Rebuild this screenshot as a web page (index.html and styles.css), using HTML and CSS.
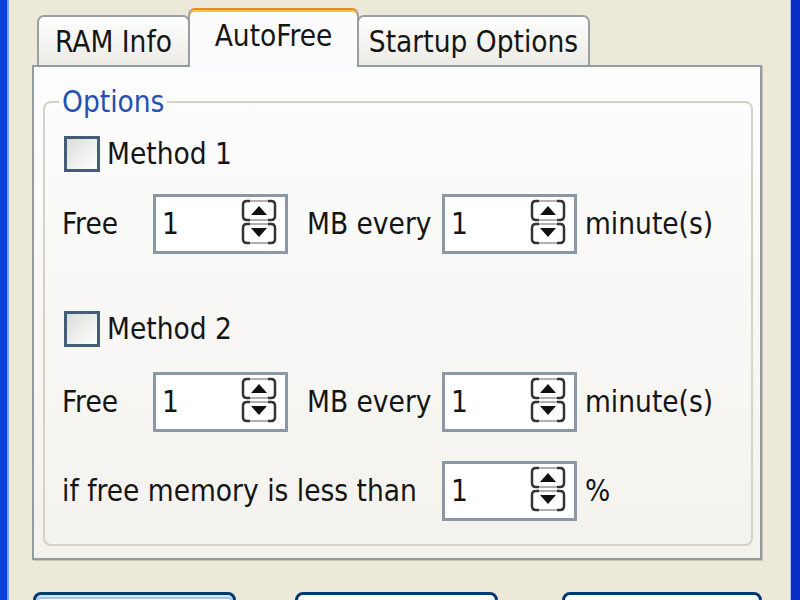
FILE: index.html
```html
<!DOCTYPE html>
<html>
<head>
<meta charset="utf-8">
<link rel="stylesheet" href="styles.css">
</head>
<body>
<div class="window">
  <div class="frame-left"></div>
  <div class="client">
    <div class="tabs">
      <div class="tab tab-ram">RAM Info</div>
      <div class="tab tab-auto active">AutoFree</div>
      <div class="tab tab-startup">Startup Options</div>
    </div>
    <div class="panel">
      <fieldset class="group">
        <legend>Options</legend>
        <div class="form">
          <div class="check-row row-m1"><span class="box"></span><span>Method 1</span></div>
          <div class="row row-a">
            <span class="lbl">Free</span>
            <div class="spin"><span class="val">1</span><svg class="spin-btn" viewBox="0 0 36 46" width="36" height="46"><path d="M9 2H6Q2 2 2 6V17Q2 21 6 21H9M27 2H30Q34 2 34 6V17Q34 21 30 21H27" fill="none" stroke="#333" stroke-width="2.5"/><path d="M9 2H27M9 21H27" stroke="#b0b0b0" stroke-width="2"/><path d="M18 7L26 16H10Z" fill="#111"/><path d="M9 25H6Q2 25 2 29V40Q2 44 6 44H9M27 25H30Q34 25 34 29V40Q34 44 30 44H27" fill="none" stroke="#333" stroke-width="2.5"/><path d="M9 25H27M9 44H27" stroke="#b0b0b0" stroke-width="2"/><path d="M10 29H26L18 38Z" fill="#111"/></svg></div>
            <span class="lbl lbl-mid">MB every</span>
            <div class="spin"><span class="val">1</span><svg class="spin-btn" viewBox="0 0 36 46" width="36" height="46"><path d="M9 2H6Q2 2 2 6V17Q2 21 6 21H9M27 2H30Q34 2 34 6V17Q34 21 30 21H27" fill="none" stroke="#333" stroke-width="2.5"/><path d="M9 2H27M9 21H27" stroke="#b0b0b0" stroke-width="2"/><path d="M18 7L26 16H10Z" fill="#111"/><path d="M9 25H6Q2 25 2 29V40Q2 44 6 44H9M27 25H30Q34 25 34 29V40Q34 44 30 44H27" fill="none" stroke="#333" stroke-width="2.5"/><path d="M9 25H27M9 44H27" stroke="#b0b0b0" stroke-width="2"/><path d="M10 29H26L18 38Z" fill="#111"/></svg></div>
            <span class="lbl lbl-unit">minute(s)</span>
          </div>
          <div class="check-row row-m2"><span class="box"></span><span>Method 2</span></div>
          <div class="row row-b">
            <span class="lbl">Free</span>
            <div class="spin"><span class="val">1</span><svg class="spin-btn" viewBox="0 0 36 46" width="36" height="46"><path d="M9 2H6Q2 2 2 6V17Q2 21 6 21H9M27 2H30Q34 2 34 6V17Q34 21 30 21H27" fill="none" stroke="#333" stroke-width="2.5"/><path d="M9 2H27M9 21H27" stroke="#b0b0b0" stroke-width="2"/><path d="M18 7L26 16H10Z" fill="#111"/><path d="M9 25H6Q2 25 2 29V40Q2 44 6 44H9M27 25H30Q34 25 34 29V40Q34 44 30 44H27" fill="none" stroke="#333" stroke-width="2.5"/><path d="M9 25H27M9 44H27" stroke="#b0b0b0" stroke-width="2"/><path d="M10 29H26L18 38Z" fill="#111"/></svg></div>
            <span class="lbl lbl-mid">MB every</span>
            <div class="spin"><span class="val">1</span><svg class="spin-btn" viewBox="0 0 36 46" width="36" height="46"><path d="M9 2H6Q2 2 2 6V17Q2 21 6 21H9M27 2H30Q34 2 34 6V17Q34 21 30 21H27" fill="none" stroke="#333" stroke-width="2.5"/><path d="M9 2H27M9 21H27" stroke="#b0b0b0" stroke-width="2"/><path d="M18 7L26 16H10Z" fill="#111"/><path d="M9 25H6Q2 25 2 29V40Q2 44 6 44H9M27 25H30Q34 25 34 29V40Q34 44 30 44H27" fill="none" stroke="#333" stroke-width="2.5"/><path d="M9 25H27M9 44H27" stroke="#b0b0b0" stroke-width="2"/><path d="M10 29H26L18 38Z" fill="#111"/></svg></div>
            <span class="lbl lbl-unit">minute(s)</span>
          </div>
          <div class="row row-c">
            <span class="lbl lbl-long">if free memory is less than</span>
            <div class="spin"><span class="val">1</span><svg class="spin-btn" viewBox="0 0 36 46" width="36" height="46"><path d="M9 2H6Q2 2 2 6V17Q2 21 6 21H9M27 2H30Q34 2 34 6V17Q34 21 30 21H27" fill="none" stroke="#333" stroke-width="2.5"/><path d="M9 2H27M9 21H27" stroke="#b0b0b0" stroke-width="2"/><path d="M18 7L26 16H10Z" fill="#111"/><path d="M9 25H6Q2 25 2 29V40Q2 44 6 44H9M27 25H30Q34 25 34 29V40Q34 44 30 44H27" fill="none" stroke="#333" stroke-width="2.5"/><path d="M9 25H27M9 44H27" stroke="#b0b0b0" stroke-width="2"/><path d="M10 29H26L18 38Z" fill="#111"/></svg></div>
            <span class="lbl lbl-unit">%</span>
          </div>
        </div>
      </fieldset>
    </div>
    <div class="buttons">
      <div class="btn btn-default"><span class="focus"></span></div>
      <div class="btn btn-2"></div>
      <div class="btn btn-3"></div>
    </div>
  </div>
  <div class="frame-right"></div>
</div>
</body>
</html>
```

FILE: styles.css
```css
html, body {
  margin: 0;
  height: 600px;
  overflow: hidden;
}
body {
  background: #ece9d8;
  font-family: "DejaVu Sans Condensed", "DejaVu Sans", sans-serif;
  font-size: 29.5px;
  color: #151515;
}
.window {
  display: flex;
  height: 600px;
  overflow: hidden;
}
.frame-left {
  width: 7px;
  background: #0b40dc;
  border-right: 2px solid #7ea6ee;
}
.frame-right {
  width: 9px;
  background: #0a2ec4;
  border-left: 1px solid #9fbaf0;
}
.client {
  flex: 1;
  box-sizing: border-box;
  height: 600px;
  overflow: hidden;
  padding: 8px 28px 0 23px;
}
.tabs {
  display: flex;
  align-items: flex-end;
  padding-left: 5px;
  height: 59px;
  margin-bottom: -2px;
  position: relative;
  z-index: 1;
}
.tab {
  box-sizing: border-box;
  height: 50px;
  margin-bottom: 2px;
  border: 2px solid #9aa0a1;
  border-bottom: none;
  border-radius: 7px 7px 0 0;
  background: linear-gradient(#fefefe, #ecebe5);
  text-align: center;
  line-height: 50px;
  white-space: nowrap;
}
.tab-ram { width: 153px; }
.tab-auto { width: 171px; margin: 0 -2px; }
.tab-startup { width: 233px; }
.tab.active {
  height: 59px;
  margin-bottom: 0;
  background: #fcfcfe;
  border-top: 2px solid #e68b2c;
  box-shadow: inset 0 2px 0 #ffc83c;
  position: relative;
  z-index: 2;
  line-height: 52px;
}
.panel {
  box-sizing: border-box;
  height: 495px;
  border: 2px solid #939b9c;
  background: linear-gradient(#fdfdfe, #f3f2ed);
  box-shadow: 1px 1px 0 #c9c6b6;
  display: flow-root;
}
.group {
  margin: 18px 7px 0 9px;
  border: 2px solid #d3d2c4;
  border-radius: 8px;
  padding: 0 17px 23px 17px;
}
.group legend {
  color: #2450b4;
  padding: 0 3px;
  margin-left: -3px;
  line-height: 34px;
}
.form {
  display: flex;
  flex-direction: column;
}
.check-row {
  display: flex;
  align-items: center;
  height: 36px;
}
.box {
  box-sizing: border-box;
  width: 36px;
  height: 36px;
  margin-left: 2px;
  margin-right: 7px;
  border: 3px solid #445d78;
  background: linear-gradient(135deg, #dcdcd7, #ffffff);
}
.row-m1 { margin-top: 17px; }
.row-a { margin-top: 22px; }
.row-m2 { margin-top: 57px; }
.row-b { margin-top: 25px; }
.row-c { margin-top: 29px; }
.row {
  display: grid;
  grid-template-columns: 91px 135px 154px 135px auto;
  align-items: center;
}
.lbl-mid { padding-left: 19px; }
.lbl-unit { padding-left: 8px; }
.lbl-long { grid-column: 1 / 4; }
.spin {
  box-sizing: border-box;
  height: 60px;
  border: 3px solid #8a98a6;
  background: #fff;
  display: flex;
  align-items: center;
  justify-content: space-between;
  padding: 0 8px 0 6px;
}
.spin-btn {
  display: block;
  margin-top: -4px;
}
.buttons {
  display: flex;
  padding-top: 32px;
}
.btn {
  box-sizing: border-box;
  height: 46px;
  border: 3px solid #003c74;
  border-radius: 8px;
  background: linear-gradient(#ffffff, #ecebe6);
}
.btn-default {
  width: 204px;
  margin-left: 1px;
  box-shadow: inset 0 2px 0 #cee7ff, inset 0 4px 0 #a4c0ec;
  padding: 6px 6px;
}
.btn-default .focus {
  display: block;
  height: 30px;
  border: 2px dotted #555;
}
.btn-2 { width: 204px; margin-left: 59px; }
.btn-3 { width: 201px; margin-left: 64px; }
```
